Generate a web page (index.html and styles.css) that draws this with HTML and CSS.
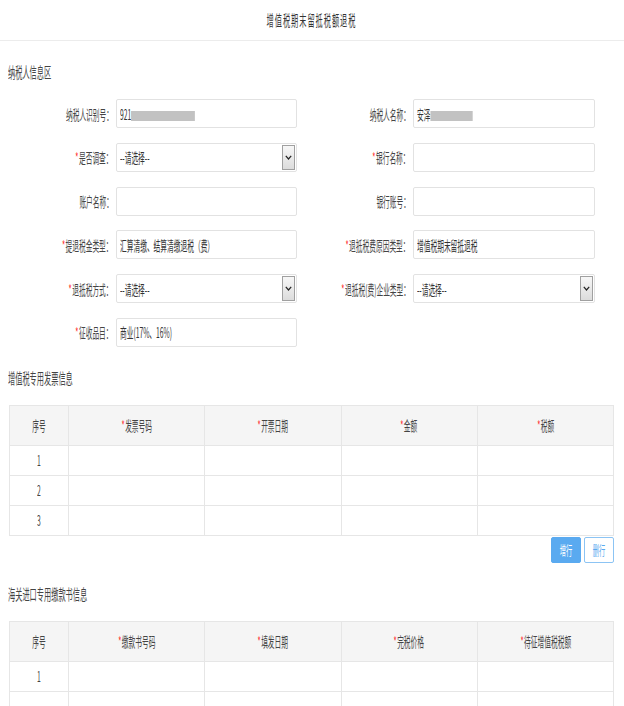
FILE: index.html
```html
<!DOCTYPE html>
<html lang="zh-CN">

<head>
  <meta charset="UTF-8" />
  <meta name="viewport" content="width=device-width, initial-scale=1.0" />
  <title>增值税期末留抵税额退税</title>
  <link rel="stylesheet" href="styles.css">
</head>

<body>
  <!-- 标题栏 -->
  <div class="header"><span class="t">增值税期末留抵税额退税</span></div>

  <div class="content">
    <!-- 纳税人信息区 -->
    <div class="section-title"><span class="t">纳税人信息区</span></div>
    <div class="form">
      <label><span class="t">纳税人识别号：</span></label>
      <div class="input"><span class="t">921<i class="mask mask-id"></i></span></div>
      <label><span class="t">纳税人名称：</span></label>
      <div class="input"><span class="t">安泽<i class="mask mask-name"></i></span></div>

      <label><span class="t"><b class="req">*</b>是否调查：</span></label>
      <div class="input select"><span class="t">--请选择--</span><span class="arrow"><svg viewBox="0 0 7 5" width="7" height="5"><path d="M.8 .8 3.5 4 6.2 .8" fill="none" stroke="#222" stroke-width="1.2"/></svg></span></div>
      <label><span class="t"><b class="req">*</b>银行名称：</span></label>
      <div class="input"></div>

      <label><span class="t">账户名称：</span></label>
      <div class="input"></div>
      <label><span class="t">银行账号：</span></label>
      <div class="input"></div>

      <label><span class="t"><b class="req">*</b>提退税金类型：</span></label>
      <div class="input"><span class="t">汇算清缴、结算清缴退税（费）</span></div>
      <label><span class="t"><b class="req">*</b>退抵税费原因类型：</span></label>
      <div class="input"><span class="t">增值税期末留抵退税</span></div>

      <label><span class="t"><b class="req">*</b>退抵税方式：</span></label>
      <div class="input select"><span class="t">--请选择--</span><span class="arrow"><svg viewBox="0 0 7 5" width="7" height="5"><path d="M.8 .8 3.5 4 6.2 .8" fill="none" stroke="#222" stroke-width="1.2"/></svg></span></div>
      <label><span class="t"><b class="req">*</b>退抵税(费)企业类型：</span></label>
      <div class="input select"><span class="t">--请选择--</span><span class="arrow"><svg viewBox="0 0 7 5" width="7" height="5"><path d="M.8 .8 3.5 4 6.2 .8" fill="none" stroke="#222" stroke-width="1.2"/></svg></span></div>

      <label><span class="t"><b class="req">*</b>征收品目：</span></label>
      <div class="input"><span class="t">商业(17%、16%)</span></div>
    </div>

    <!-- 增值税专用发票信息 -->
    <div class="section-title"><span class="t">增值税专用发票信息</span></div>
    <table class="grid">
      <tr>
        <th class="col-no"><span class="t">序号</span></th>
        <th><span class="t"><b class="req">*</b>发票号码</span></th>
        <th><span class="t"><b class="req">*</b>开票日期</span></th>
        <th><span class="t"><b class="req">*</b>金额</span></th>
        <th><span class="t"><b class="req">*</b>税额</span></th>
      </tr>
      <tr><td><span class="t">1</span></td><td></td><td></td><td></td><td></td></tr>
      <tr><td><span class="t">2</span></td><td></td><td></td><td></td><td></td></tr>
      <tr><td><span class="t">3</span></td><td></td><td></td><td></td><td></td></tr>
    </table>
    <div class="actions">
      <button class="btn btn-primary"><span class="t">增行</span></button>
      <button class="btn"><span class="t">删行</span></button>
    </div>

    <!-- 海关进口专用缴款书信息 -->
    <div class="section-title"><span class="t">海关进口专用缴款书信息</span></div>
    <table class="grid">
      <tr>
        <th class="col-no"><span class="t">序号</span></th>
        <th><span class="t"><b class="req">*</b>缴款书号码</span></th>
        <th><span class="t"><b class="req">*</b>填发日期</span></th>
        <th><span class="t"><b class="req">*</b>完税价格</span></th>
        <th><span class="t"><b class="req">*</b>待征增值税税额</span></th>
      </tr>
      <tr><td><span class="t">1</span></td><td></td><td></td><td></td><td></td></tr>
      <tr><td></td><td></td><td></td><td></td><td></td></tr>
    </table>
  </div>
</body>

</html>
```

FILE: styles.css
```css
html,
body {
  margin: 0;
  overflow: hidden;
  background: #fff;
}

body {
  font-family: "Noto Sans CJK SC", "Liberation Sans", sans-serif;
  font-size: 14px;
  color: #444;
}

/* 截图里的字是横向压扁的 */
.t {
  display: inline-block;
  white-space: nowrap;
  transform: scaleX(0.48);
  transform-origin: center;
}

.req {
  font-weight: normal;
  color: #f33;
  margin-right: 1px;
}

.header {
  height: 40px;
  line-height: 40px;
  text-align: center;
  color: #333;
  border-bottom: 1px solid #ececec;
}

.header .t {
  font-size: 15px;
  letter-spacing: 2px;
}

.content {
  padding: 0 10px 0 9px;
}

.section-title {
  margin: 21px 0 17px -1px;
  line-height: 20px;
  font-size: 15px;
}

.section-title .t {
  transform-origin: left center;
}

/* 表单 */
.form {
  display: grid;
  grid-template-columns: 107px 181px 116px 182px;
  row-gap: 14.8px;
}

.form label {
  display: flex;
  justify-content: flex-end;
  align-items: center;
  padding-right: 3px;
  height: 29px;
}

.form label .t {
  transform-origin: right center;
}

.input {
  height: 29px;
  box-sizing: border-box;
  border: 1px solid #e2e2e2;
  border-radius: 2px;
  padding-left: 3px;
  display: flex;
  align-items: center;
  color: #333;
}

.input .t {
  transform-origin: left center;
}

.mask {
  display: inline-block;
  height: 10px;
  vertical-align: -1px;
  background: #c2c2c2;
}

.mask-id {
  width: 133px;
}

.mask-name {
  width: 88px;
}

.select .arrow {
  align-self: stretch;
  margin: 1px 1px 1px auto;
  width: 13px;
  box-sizing: border-box;
  border: 1px solid #a0a0a0;
  background: linear-gradient(#f7f7f7, #dcdcdc);
  display: flex;
  align-items: center;
  justify-content: center;
}

/* 表格 */
.grid {
  width: 100%;
  margin-top: 2px;
  border-collapse: collapse;
  table-layout: fixed;
}

.grid th,
.grid td {
  border: 1px solid #e6e6e6;
  text-align: center;
  padding: 0;
}

.grid th {
  height: 39px;
  background: #f5f5f5;
  font-weight: normal;
}

.grid td {
  height: 29px;
}

.grid .col-no {
  width: 58px;
}

.actions {
  display: flex;
  justify-content: flex-end;
  gap: 3px;
  margin-top: 1px;
}

.btn {
  width: 30px;
  height: 26px;
  padding: 0;
  font-family: inherit;
  font-size: 13px;
  color: #5aaaf0;
  background: #fff;
  border: 1px solid #8cc4f4;
  border-radius: 2px;
}

.btn-primary {
  color: #fff;
  background: #5aaaf0;
  border-color: #5aaaf0;
}
```
